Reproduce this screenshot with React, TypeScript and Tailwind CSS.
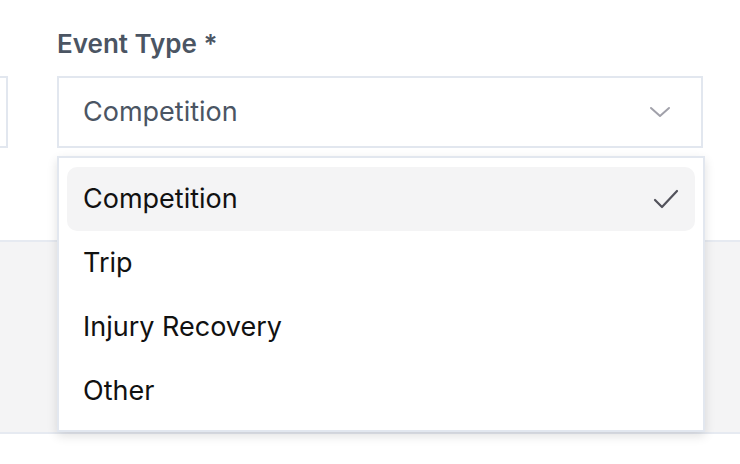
const options = ["Competition", "Trip", "Injury Recovery", "Other"];

function ChevronDown() {
  return (
    <svg width="22" height="12" viewBox="0 0 22 12" fill="none" stroke="#a1a1aa" strokeWidth="2" strokeLinecap="round" strokeLinejoin="round">
      <path d="M2 2l9 8 9-8" />
    </svg>
  );
}

function Check() {
  return (
    <svg width="26" height="20" viewBox="0 0 26 20" fill="none" stroke="#52525b" strokeWidth="2.2" strokeLinecap="round" strokeLinejoin="round">
      <path d="M2 11l7 7L24 2" />
    </svg>
  );
}

export default function App() {
  return (
    <div className="relative h-[464px] w-[740px] overflow-hidden bg-white font-['Inter',sans-serif]">
      <div className="flex gap-[49px] pt-[28px]">
        <div className="-ml-[300px] w-[308px] shrink-0">
          <div className="mb-4 h-8" />
          <div className="h-[72px] border-2 border-[#e2e7ef] bg-white" />
        </div>
        <div className="w-[646px] shrink-0">
          <div className="mb-4 h-8 text-[26px] font-semibold leading-8 text-[#4b5563]">Event Type *</div>
          <div className="flex h-[72px] items-center justify-between border-2 border-[#e2e7ef] bg-white pl-[24px] pr-[30px]">
            <span className="text-[27px] text-[#4b5563]">Competition</span>
            <ChevronDown />
          </div>
        </div>
      </div>
      <div className="mt-[92px] h-[194px] border-y-2 border-[#e6eaf1] bg-[#f4f4f5]" />

      <div className="absolute left-[57px] top-[156px] h-[276px] w-[648px] border-2 border-[#e2e7ef] bg-white px-[8px] pb-[7px] pt-[9px] shadow-[0_4px_10px_rgba(0,0,0,0.12)]">
        {options.map((o, i) => (
          <div
            key={o}
            className={
              i === 0
                ? "flex h-[64px] items-center justify-between rounded-[10px] bg-[#f4f4f5] pl-[16px] pr-[16px]"
                : "flex h-[64px] items-center justify-between rounded-[10px] pl-[16px] pr-[16px]"
            }
          >
            <span className="text-[27px] text-[#111111]">{o}</span>
            {i === 0 && <Check />}
          </div>
        ))}
      </div>
    </div>
  );
}
